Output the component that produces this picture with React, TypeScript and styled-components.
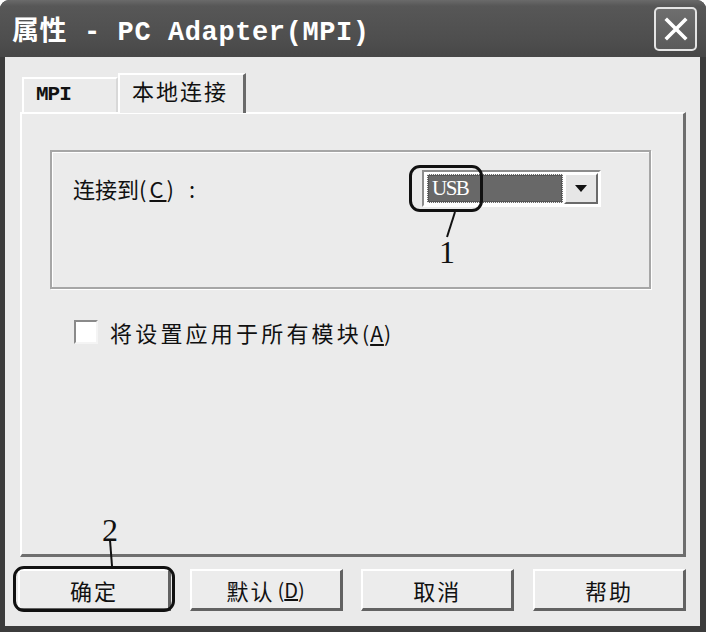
import React from "react";
import styled, { createGlobalStyle } from "styled-components";

const Global = createGlobalStyle`
  html, body { margin: 0; padding: 0; background: #ffffff; }
  body { font-family: "Noto Sans CJK SC", "Liberation Sans", sans-serif; }
`;

const Window = styled.div`
  width: 706px;
  height: 632px;
  box-sizing: border-box;
  display: flex;
  flex-direction: column;
  background: #3c3c3c;
  border-radius: 9px 9px 0 0;
  overflow: hidden;
`;

const TitleBar = styled.div`
  height: 57px;
  flex: none;
  display: flex;
  align-items: center;
  justify-content: space-between;
  padding: 0 9px 0 12px;
  background: linear-gradient(#6a6a6a 0px, #575757 6px, #4e4e4e 40px, #474747 57px);
`;

const TitleText = styled.div`
  color: #ffffff;
  font-family: "Liberation Mono", "Noto Sans CJK SC", monospace;
  font-weight: bold;
  font-size: 27px;
  letter-spacing: 0.6px;
  line-height: 1;
  padding-top: 9px;
  white-space: pre;
`;

const CloseButton = styled.div`
  width: 43px;
  height: 44px;
  box-sizing: border-box;
  border: 2px solid #e4e4e4;
  border-radius: 5px;
  background: linear-gradient(#6e6e6e, #5a5a5a);
  display: flex;
  align-items: center;
  justify-content: center;
`;

const Client = styled.div`
  flex: 1;
  margin: 0 6px 6px 5px;
  background: #eaeaea;
  display: flex;
  flex-direction: column;
  padding: 16px 14px 0 15px;
`;

const TabRow = styled.div`
  display: flex;
  align-items: flex-end;
  height: 39px;
  padding-left: 2px;
`;

const Tab = styled.div<{ $active?: boolean }>`
  box-sizing: border-box;
  height: ${(p) => (p.$active ? 40 : 35)}px;
  width: ${(p) => (p.$active ? 128 : 96)}px;
  margin-bottom: ${(p) => (p.$active ? -1 : 0)}px;
  background: #ebebeb;
  border-top: 2px solid #ffffff;
  border-left: 2px solid #ffffff;
  border-right: ${(p) => (p.$active ? "3px solid #6a6a6a" : "2px solid #d8d8d8")};
  display: flex;
  align-items: center;
  padding-left: ${(p) => (p.$active ? 12 : 12)}px;
  padding-bottom: ${(p) => (p.$active ? 9 : 3)}px;
  position: relative;
  z-index: ${(p) => (p.$active ? 2 : 1)};
  color: #111;
`;

const MonoLabel = styled.span`
  font-family: "Liberation Mono", monospace;
  font-size: 21px;
  font-weight: bold;
  letter-spacing: -1px;
`;

const CjkLabel = styled.span`
  font-family: "Noto Sans CJK SC", sans-serif;
  font-size: 22px;
  letter-spacing: 2px;
  line-height: 1;
`;

const Panel = styled.div`
  box-sizing: border-box;
  height: 445px;
  background: #ebebeb;
  border-top: 2px solid #ffffff;
  border-left: 2px solid #ffffff;
  border-right: 3px solid #6e6e6e;
  border-bottom: 3px solid #6e6e6e;
  padding: 36px 32px 0 28px;
  display: flex;
  flex-direction: column;
`;

const GroupBox = styled.div`
  box-sizing: border-box;
  height: 139px;
  border: 2px solid #a6a6a6;
  box-shadow: inset 1px 1px 0 #ffffff, 1px 1px 0 #ffffff;
  display: flex;
  align-items: center;
  align-self: stretch;
`;

const GroupRow = styled.div`
  flex: 1;
  align-self: flex-start;
  margin-top: 18px;
  height: 37px;
  display: flex;
  align-items: center;
  padding: 0 48px 0 21px;
`;

const FieldLabel = styled.div`
  font-family: "Noto Sans CJK SC", sans-serif;
  font-size: 22px;
  color: #111;
  display: flex;
  align-items: center;
  margin-top: -2px;
  span.paren {
    letter-spacing: 3px;
  }
`;

const Colon = styled.span`
  margin-left: 12px;
`;

const ComboWrap = styled.div`
  margin-left: auto;
  position: relative;
`;

const Combo = styled.div`
  width: 179px;
  height: 37px;
  box-sizing: border-box;
  border-top: 2px solid #8c8c8c;
  border-left: 2px solid #8c8c8c;
  border-right: 2px solid #ffffff;
  border-bottom: 2px solid #ffffff;
  background: #ffffff;
  display: flex;
  padding: 1px;
`;

const ComboValue = styled.div`
  flex: 1;
  background: #686868;
  border: 1px dotted #f0f0f0;
  outline: 1px solid #555;
  outline-offset: -2px;
  margin: 1px 1px 1px 2px;
  color: #ffffff;
  font-family: "Liberation Serif", serif;
  font-size: 21px;
  line-height: 1;
  display: flex;
  align-items: center;
  padding-left: 4px;
  letter-spacing: -1.5px;
`;

const DropButton = styled.div`
  width: 34px;
  box-sizing: border-box;
  background: #e6e6e6;
  border-top: 2px solid #ffffff;
  border-left: 2px solid #ffffff;
  border-right: 2px solid #6a6a6a;
  border-bottom: 2px solid #6a6a6a;
  display: flex;
  align-items: center;
  justify-content: center;
`;

const Callout = styled.div<{ $w: number; $h: number; $l: number; $t: number }>`
  position: absolute;
  left: ${(p) => p.$l}px;
  top: ${(p) => p.$t}px;
  width: ${(p) => p.$w}px;
  height: ${(p) => p.$h}px;
  box-sizing: border-box;
  border: 3px solid #111;
  border-radius: 11px;
  pointer-events: none;
  z-index: 5;
`;

const Leader = styled.svg`
  position: absolute;
  overflow: visible;
  z-index: 5;
`;

const Number = styled.div<{ $l: number; $t: number }>`
  position: absolute;
  left: ${(p) => p.$l}px;
  top: ${(p) => p.$t}px;
  font-family: "Liberation Serif", serif;
  font-size: 32px;
  line-height: 1;
  color: #111;
  z-index: 5;
`;

const CheckRow = styled.div`
  display: flex;
  align-items: center;
  margin-top: 27px;
  padding-left: 24px;
  gap: 12px;
`;

const CheckBox = styled.div`
  width: 24px;
  height: 24px;
  box-sizing: border-box;
  background: #ffffff;
  border-top: 2px solid #8a8a8a;
  border-left: 2px solid #8a8a8a;
  border-right: 2px solid #f4f4f4;
  border-bottom: 2px solid #f4f4f4;
`;

const CheckLabel = styled.div`
  font-family: "Noto Sans CJK SC", sans-serif;
  font-size: 22px;
  letter-spacing: 3.2px;
  color: #111;
  small {
    font-size: 21px;
    letter-spacing: 1px;
  }
`;

const ButtonRow = styled.div`
  display: flex;
  justify-content: space-between;
  margin-top: 12px;
  margin-left: -2px;
`;

const ButtonWrap = styled.div`
  position: relative;
`;

const Button = styled.div`
  width: 153px;
  height: 42px;
  box-sizing: border-box;
  background: #ececec;
  border-top: 2px solid #ffffff;
  border-left: 2px solid #ffffff;
  border-right: 3px solid #626262;
  border-bottom: 3px solid #626262;
  display: flex;
  align-items: center;
  justify-content: center;
  font-family: "Noto Sans CJK SC", sans-serif;
  font-size: 22px;
  letter-spacing: 2px;
  color: #111;
  small {
    font-size: 20px;
    letter-spacing: 0;
    margin-left: 3px;
  }
`;

export default function App() {
  return (
    <>
      <Global />
      <Window>
        <TitleBar>
          <TitleText>属性 - PC Adapter(MPI)</TitleText>
          <CloseButton>
            <svg width="26" height="26" viewBox="0 0 26 26">
              <path d="M4 4 L22 22 M22 4 L4 22" stroke="#ffffff" strokeWidth="3.6" strokeLinecap="square" />
            </svg>
          </CloseButton>
        </TitleBar>
        <Client>
          <TabRow>
            <Tab>
              <MonoLabel>MPI</MonoLabel>
            </Tab>
            <Tab $active>
              <CjkLabel>本地连接</CjkLabel>
            </Tab>
          </TabRow>
          <Panel>
            <GroupBox>
              <GroupRow>
                <FieldLabel>
                  连接到
                  <span className="paren">
                    (<u>C</u>)
                  </span>
                  <Colon>:</Colon>
                </FieldLabel>
                <ComboWrap>
                  <Combo>
                    <ComboValue>USB</ComboValue>
                    <DropButton>
                      <svg width="12" height="8" viewBox="0 0 12 8">
                        <path d="M0 0 H12 L6 7 Z" fill="#111" />
                      </svg>
                    </DropButton>
                  </Combo>
                  <Callout $l={-13} $t={-5} $w={74} $h={47} />
                  <Leader width="10" height="26" style={{ left: 24, top: 42 }}>
                    <path d="M9 0 L1 25" stroke="#111" strokeWidth="2" />
                  </Leader>
                  <Number $l={17} $t={66}>1</Number>
                </ComboWrap>
              </GroupRow>
            </GroupBox>
            <CheckRow>
              <CheckBox />
              <CheckLabel>
                将设置应用于所有模块<small>(<u>A</u>)</small>
              </CheckLabel>
            </CheckRow>
          </Panel>
          <ButtonRow>
            <ButtonWrap>
              <Button>确定</Button>
              <Callout $l={-5} $t={-3} $w={162} $h={46} />
              <Leader width="6" height="26" style={{ left: 92, top: -29 }}>
                <path d="M0 0 L2 26" stroke="#111" strokeWidth="2" />
              </Leader>
              <Number $l={84} $t={-55}>2</Number>
            </ButtonWrap>
            <Button>
              默认<small>(<u>D</u>)</small>
            </Button>
            <Button>取消</Button>
            <Button>帮助</Button>
          </ButtonRow>
        </Client>
      </Window>
    </>
  );
}
